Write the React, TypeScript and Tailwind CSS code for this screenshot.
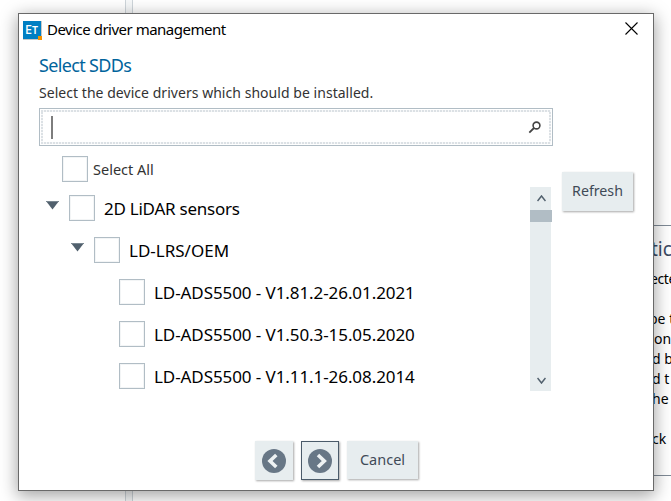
import React from "react";

const FONT = "font-['Noto_Sans','Open_Sans',sans-serif]";

function CheckBox() {
  return (
    <span className="block size-[26px] shrink-0 border border-[#b1bdc5] bg-white shadow-[inset_0_0_0_1px_#f3f5f6]" />
  );
}

function Arrow() {
  return (
    <svg width="13" height="9" viewBox="0 0 13 9" className="shrink-0">
      <path d="M0 0H13L6.5 8.5Z" fill="#51606d" />
      <path d="M0 0.5H13" stroke="#7a8791" />
    </svg>
  );
}

function DriverRow({ label }: { label: string }) {
  return (
    <div className="flex h-[42px] items-center pl-[80px]">
      <CheckBox />
      <span className="mt-px ml-[9px] text-[17px] tracking-[-0.08px] text-black">{label}</span>
    </div>
  );
}

const drivers = [
  "LD-ADS5500 - V1.81.2-26.01.2021",
  "LD-ADS5500 - V1.50.3-15.05.2020",
  "LD-ADS5500 - V1.11.1-26.08.2014",
];

const instructions = [
  { text: "ecte", shift: "-ml-[3px] tracking-[-0.4px]" },
  { text: "", shift: "" },
  { text: "be t", shift: "-ml-[4px]" },
  { text: "on", shift: "ml-px" },
  { text: "d b", shift: "-ml-px" },
  { text: "d t", shift: "-ml-px" },
  { text: "he", shift: "-ml-px" },
  { text: "", shift: "" },
  { text: "ck", shift: "-ml-px" },
];

const button =
  "flex items-center justify-center bg-[#e7edef] text-[#3f4a57] shadow-[1px_1px_2px_0px_rgba(0,0,0,0.35)]";

const dotsX = "bg-[repeating-linear-gradient(90deg,#dce1e5_0_2px,#f7f8f9_2px_3px)]";
const dotsY = "bg-[repeating-linear-gradient(180deg,#dce1e5_0_2px,#f7f8f9_2px_3px)]";

function Backdrop() {
  return (
    <div className="flex h-full">
      <div className="w-[125px] shrink-0" />
      <div className="w-2 shrink-0 border-x border-[#ced5da] bg-[#f6f8f9]" />
      <div className="flex flex-1 flex-col items-end pt-[225px]">
        <div className="h-[251px] w-[120px] overflow-hidden border-y border-[#7f8a96] pl-[102px]">
          <div className="mt-[9px] -ml-[2px] text-[19px] leading-[28px] whitespace-nowrap text-[#3c4a63]">tic</div>
          <div className="mt-[6px] text-[14px] leading-5 whitespace-nowrap text-black">
            {instructions.map((line, i) => (
              <div key={i} className={`h-5 ${line.shift}`}>{line.text}</div>
            ))}
          </div>
        </div>
      </div>
    </div>
  );
}

export default function App() {
  return (
    <div className={`relative h-[501px] w-[671px] overflow-hidden bg-white ${FONT}`}>
      <Backdrop />
      <div className="absolute top-[13px] left-[18px] flex h-[478px] w-[636px] flex-col border border-[#696969] bg-white shadow-[0_4px_16px_1px_rgba(0,0,0,0.36)]">
        <header className="flex h-8 items-center pl-1">
          <svg width="19" height="19" viewBox="0 0 19 19" className="shrink-0">
            <rect width="19" height="19" fill="#c9c8c6" />
            <rect width="18" height="18" fill="#007fc3" />
            <text x="2" y="13" fill="#fff" fontSize="12.5" fontWeight="500" fontFamily="Noto Sans">E</text>
            <text x="9" y="13" fill="#fff" fontSize="10.5" fontWeight="600" fontFamily="Noto Sans">T</text>
            <rect x="15" y="15" width="4" height="4" fill="#f39200" />
          </svg>
          <h1 className="-mt-px ml-[5px] text-[15px] tracking-[-0.5px] text-black">Device driver management</h1>
          <svg width="13" height="13" viewBox="0 0 13 13" className="-mt-[3px] mr-[15px] ml-auto">
            <path d="M0.5 0.5L12.5 12.5M12.5 0.5L0.5 12.5" stroke="#000" strokeWidth="1.1" />
          </svg>
        </header>

        <div className="flex flex-col pl-5">
          <h2 className="mt-[6px] h-[26px] text-[18px] leading-[26px] tracking-[-0.65px] text-[#00649c]">Select SDDs</h2>
          <p className="mt-[5px] h-5 text-[14px] leading-[20px] tracking-[0.04px] text-[#333]">
            Select the device drivers which should be installed.
          </p>

          <div className="mt-[5px] flex h-[38px] w-[514px] flex-col border border-[#b1bdc5] p-px">
            <div className={`h-[2px] ${dotsX}`} />
            <div className="flex flex-1">
              <div className={`w-[2px] ${dotsY}`} />
              <div className="flex flex-1 items-center justify-between pr-[8px] pl-2">
                <span className="h-[23px] w-[2px] bg-[#7d7d7d]" />
                <svg width="13" height="13" viewBox="0 0 13 13">
                  <circle cx="8.5" cy="4.5" r="3.4" fill="none" stroke="#444" strokeWidth="1.6" />
                  <path d="M6 7L1.3 11.6" stroke="#444" strokeWidth="1.8" />
                </svg>
              </div>
              <div className={`w-[2px] ${dotsY}`} />
            </div>
            <div className={`h-[2px] ${dotsX}`} />
          </div>

          <div className="flex">
            <div className="w-[514px]">
              <div className="mt-[10px] ml-[23px] flex h-[26px] items-center">
                <CheckBox />
                <span className="mt-px ml-[5px] text-[14.5px] text-[#333]">Select All</span>
              </div>

              <div className="mt-[5px] flex h-[204px] justify-between overflow-hidden">
                <div className="flex-1">
                  <div className="flex h-[42px] items-center pl-[7px]">
                    <span className="-mt-1.5"><Arrow /></span>
                    <span className="ml-[10px]"><CheckBox /></span>
                    <span className="mt-px ml-[9px] text-[17px] tracking-[-0.25px]">2D LiDAR sensors</span>
                  </div>
                  <div className="flex h-[42px] items-center pl-8">
                    <span className="-mt-1.5"><Arrow /></span>
                    <span className="ml-[10px]"><CheckBox /></span>
                    <span className="mt-px ml-[9px] text-[17px]">LD-LRS/OEM</span>
                  </div>
                  {drivers.map((d) => (
                    <DriverRow key={d} label={d} />
                  ))}
                </div>
                <div className="flex w-[23px] flex-col">
                  <div className="flex h-[23px] w-[21px] items-center justify-center bg-[#e7edef] pl-px">
                    <svg width="9" height="7" viewBox="0 0 9 7" fill="none" stroke="#51606d" strokeWidth="1.5">
                      <path d="M0.5 6L4.5 1L8.5 6" />
                    </svg>
                  </div>
                  <div className="h-3 w-[22px] bg-[#b1bdc5]" />
                  <div className="flex w-[21px] flex-1 items-end justify-center bg-[#e7edef] pb-[7px] pl-px">
                    <svg width="9" height="7" viewBox="0 0 9 7" fill="none" stroke="#51606d" strokeWidth="1.5">
                      <path d="M0.5 1L4.5 6L8.5 1" />
                    </svg>
                  </div>
                </div>
              </div>
            </div>
            <button className={`mt-[26px] ml-[9px] h-[39px] w-[71px] pb-px text-[14.2px] ${button}`}>Refresh</button>
          </div>
        </div>

        <footer className="mt-[50px] ml-[236px] flex gap-2">
          <button className={`h-[39px] w-[38px] ${button}`}>
            <svg width="24" height="24" viewBox="0 0 24 24">
              <circle cx="12" cy="12" r="12" fill="#687786" />
              <path d="M14.3 6L8 12L14.3 18" fill="none" stroke="#eef2f3" strokeWidth="3.6" />
            </svg>
          </button>
          <button className={`h-[39px] w-[38px] border border-[#4b5b6a] ${button}`}>
            <svg width="24" height="24" viewBox="0 0 24 24">
              <circle cx="12" cy="12" r="12" fill="#687786" />
              <path d="M10 6L16.3 12L10 18" fill="none" stroke="#eef2f3" strokeWidth="3.6" />
            </svg>
          </button>
          <button className={`h-[38px] w-[71px] pb-px text-[14.5px] ${button}`}>Cancel</button>
        </footer>
      </div>
    </div>
  );
}
